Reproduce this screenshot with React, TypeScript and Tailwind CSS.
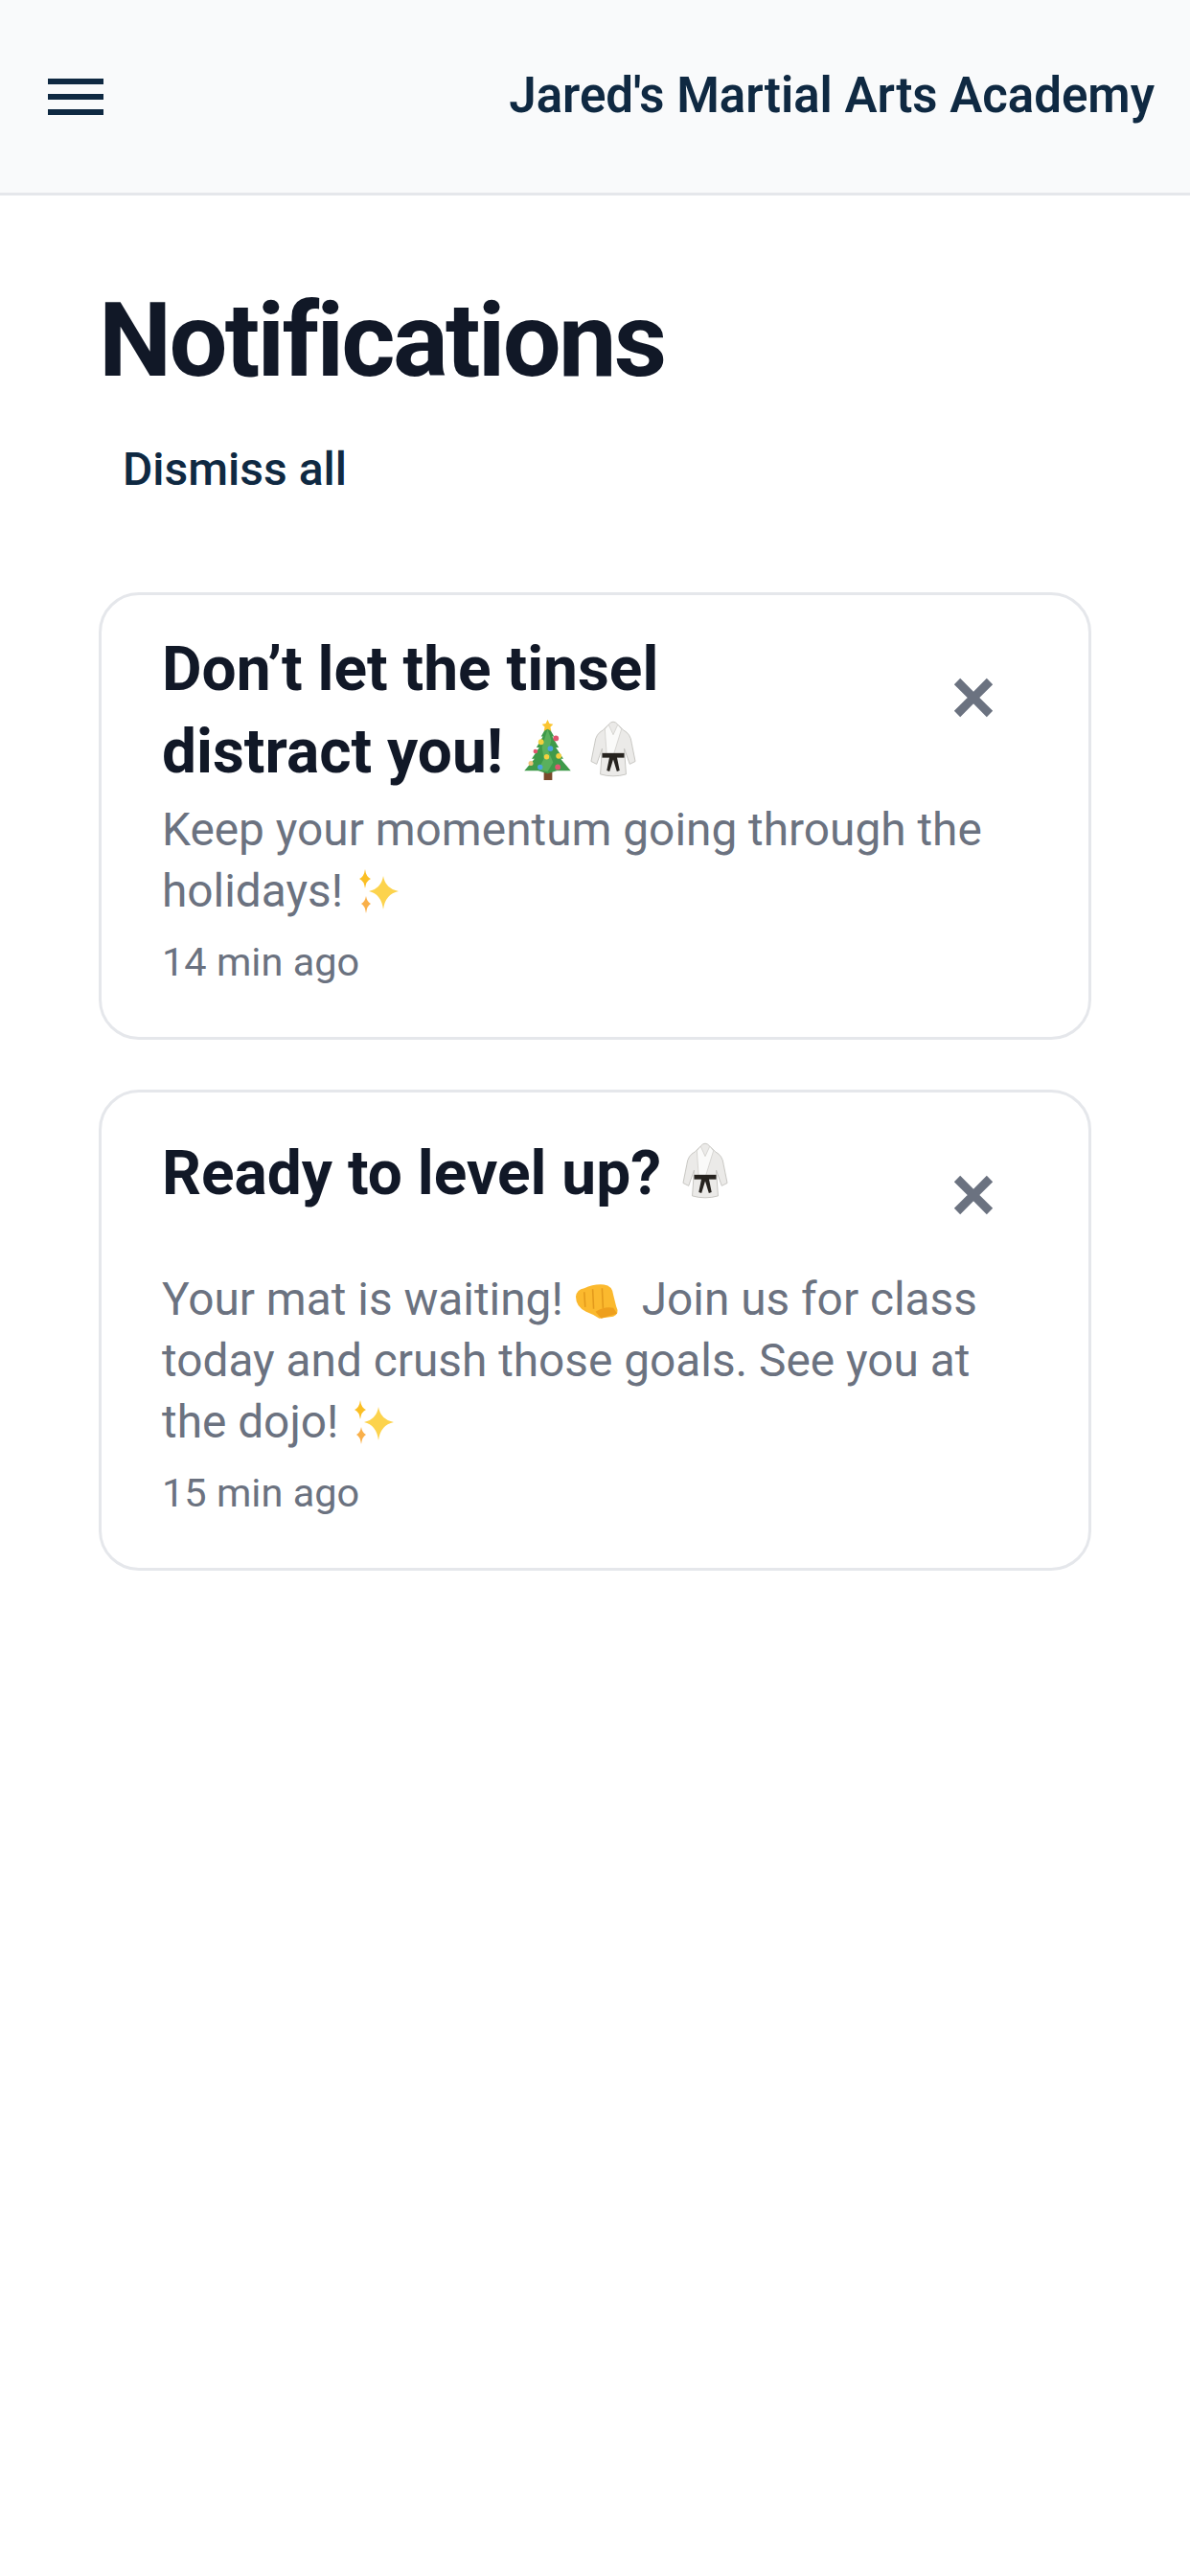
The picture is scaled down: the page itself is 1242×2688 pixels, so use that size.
function TreeEmoji() {
  return (
    <svg viewBox="0 0 52 66" className="inline-block w-[51px] h-[64px] align-[-9px] ml-[21px] mr-[-3px]">
      <rect x="22" y="54" width="9" height="11" fill="#7a4a2b" />
      <path d="M26 6 L33 18 L31 18 L38 30 L35 30 L43 42 L40 42 L51 55 L36 55 L26 58 L16 55 L1 55 L12 42 L9 42 L17 30 L14 30 L21 18 L19 18 Z" fill="#3f9a4a" />
      <path d="M26 10 L30 22 L27 34 L32 46 L26 56 L16 54 L22 42 L20 30 Z" fill="#6cc06a" opacity="0.6" />
      <path d="M26 0 L28 4 L32 5 L29 8 L30 12 L26 10 L22 12 L23 8 L20 5 L24 4 Z" fill="#fbc531" />
      <circle cx="19" cy="24" r="3" fill="#f4d03f" />
      <circle cx="35" cy="20" r="3" fill="#e0566f" />
      <circle cx="13" cy="34" r="2.4" fill="#e0566f" />
      <circle cx="29" cy="31" r="3" fill="#4aa3df" />
      <circle cx="25" cy="40" r="2.8" fill="#f4d03f" />
      <circle cx="38" cy="39" r="3" fill="#f4d03f" />
      <circle cx="8" cy="47" r="2.6" fill="#f0c27b" />
      <circle cx="18" cy="51" r="2.8" fill="#4aa3df" />
      <circle cx="37" cy="51" r="3" fill="#e0566f" />
    </svg>
  );
}

function GiEmoji() {
  return (
    <svg viewBox="0 0 50 62" className="inline-block w-[48px] h-[62px] align-[-7px] ml-[6px]">
      <path d="M20 4 Q25 -2 30 4 L36 10 Q44 14 45 24 L49 44 L43 47 L37 30 L39 58 Q25 62 11 58 L13 30 L7 47 L1 44 L5 24 Q6 14 14 10 Z" fill="#ebeae8" stroke="#c6c4c0" strokeWidth="1" />
      <path d="M20 4 L25 15 L30 4 L34 9 L25 38 L18 38 L16 9 Z" fill="#fafaf9" stroke="#cfcdc9" strokeWidth="0.8" />
      <path d="M13 35 L37 35 L37 40 L13 40 Z" fill="#26231f" />
      <path d="M21 39 L18 54 L21 55 L25 42 L29 55 L32 54 L29 39 Z" fill="#26231f" />
    </svg>
  );
}

function SparkleEmoji() {
  return (
    <svg viewBox="0 0 46 46" className="inline-block w-[46px] h-[46px] align-[-7px] ml-[2px]">
      <path d="M28 7 Q30 20 44 23 Q30 26 28 42 Q26 26 13 23 Q26 20 28 7 Z" fill="#fcd34d" />
      <path d="M9 0 Q10 8 15 10 Q10 12 9 20 Q8 12 3 10 Q8 8 9 0 Z" fill="#fbbf24" />
      <path d="M10 28 Q11 34 15 36 Q11 38 10 46 Q9 38 5 36 Q9 34 10 28 Z" fill="#f9b04a" />
    </svg>
  );
}

function FistEmoji() {
  return (
    <svg viewBox="0 0 48 38" className="inline-block w-[47px] h-[38px] align-[-5px] mr-[23px]">
      <path d="M1 14 Q2 6 10 5 Q20 0 31 1 Q40 2 41 12 L44 24 Q48 32 41 35 L26 37 Q20 33 12 30 Q1 25 1 14 Z" fill="#fbb92e" />
      <path d="M10 9 L11 25 M19 6 L20 27 M29 5 L30 26" stroke="#e39a1c" strokeWidth="1.6" fill="none" />
      <path d="M22 30 Q32 24 41 26 L45 32 L28 37 Z" fill="#ee9f1d" />
    </svg>
  );
}

function CloseIcon() {
  return (
    <svg viewBox="0 0 48 48" className="w-[48px] h-[48px]">
      <path d="M7 7 L41 41 M41 7 L7 41" stroke="#6b7280" strokeWidth="9" fill="none" />
    </svg>
  );
}

function NotificationCard({ title, body, time, titleClass }: {
  title: React.ReactNode;
  body: React.ReactNode;
  time: string;
  titleClass: string;
}) {
  return (
    <div className="border-[3px] border-[#e5e7eb] rounded-[42px] pl-[63px] pr-[96px] bg-white">
      <div className="flex items-start justify-between">
        <h2 className={`text-[64px] leading-[86px] font-bold text-[#111827] w-[640px] ${titleClass}`}>{title}</h2>
        <button className="shrink-0 mt-[83px]"><CloseIcon /></button>
      </div>
      <p className="text-[47.8px] leading-[64px] text-[#6b7280]">{body}</p>
      <p className="text-[41.5px] leading-[60px] text-[#6b7280] mt-[12px] mb-[48px]">{time}</p>
    </div>
  );
}

export default function App() {
  return (
    <div className="min-h-[2688px] bg-white font-['Roboto',sans-serif]">
      <header className="h-[204px] bg-[#f9fafb] border-b-[3px] border-[#e5e7eb] flex items-center justify-between pl-[50px] pr-[37px] pb-[2px]">
        <div className="flex flex-col gap-[10px] w-[58px] mt-[2px]">
          <span className="h-[6px] bg-[#0f2942]" />
          <span className="h-[6px] bg-[#0f2942]" />
          <span className="h-[6px] bg-[#0f2942]" />
        </div>
        <span className="text-[51px] leading-[60px] font-semibold text-[#0f2942]">Jared's Martial Arts Academy</span>
      </header>
      <main className="px-[103px]">
        <h1 className="mt-[91px] text-[108px] leading-[120px] font-bold tracking-[-2.7px] text-[#111827]">Notifications</h1>
        <button className="block ml-[25px] mt-[43px] text-[48px] leading-[64px] font-medium text-[#0f2942]">Dismiss all</button>
        <div className="mt-[96px] flex flex-col gap-[52px]">
          <NotificationCard
            titleClass="mt-[35px] mb-[6px]"
            title={<>Don’t let the tinsel distract you!<TreeEmoji /> <GiEmoji /></>}
            body={<>Keep your momentum going through the holidays! <SparkleEmoji /></>}
            time="14 min ago"
          />
          <NotificationCard
            titleClass="mt-[42px] mb-[56px]"
            title={<>Ready to level up? <GiEmoji /></>}
            body={<>Your mat is waiting! <FistEmoji />Join us for class today and crush those goals. See you at the dojo! <SparkleEmoji /></>}
            time="15 min ago"
          />
        </div>
      </main>
    </div>
  );
}
